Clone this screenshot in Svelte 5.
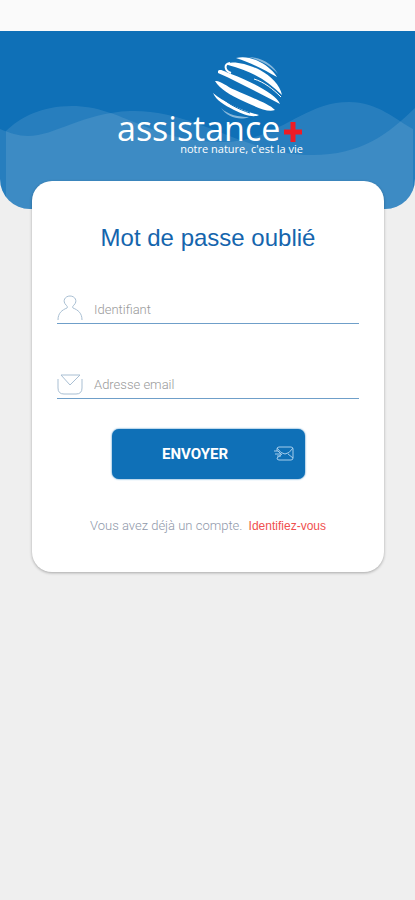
<script>
	let login = $state('');
	let email = $state('');
</script>

<div class="status"></div>

<header>
	<svg class="waves" viewBox="0 0 415 178" preserveAspectRatio="none" aria-hidden="true">
		<path
			d="M0 98 C10 102 18 105 28 105 C55 105 82 82 130 80 C195 78 245 124 312 124 C362 124 388 103 415 77 V178 H0 Z"
		/>
		<path
			d="M6 100 C20 86 42 75 72 75 C122 75 150 111 222 111 C278 111 302 71 349 71 C378 71 396 89 413 98 V178 H6 Z"
		/>
	</svg>

	<svg class="logo" viewBox="-6 0 192 100" role="img" aria-label="assistance+">
		<g fill="#fff">
			<path d="M130 1 C145 1 156 10 160 18 C152 9 142 4 130 1 Z" fill-opacity="0.5" />
			<path d="M118 2 C126 0 135 2 142 6 C150 10 156 16 159 21 C148 15 134 7 118 2 Z" />
			<path d="M110 7 C118 5 132 9 142 14 C153 20 162 29 164 39 C150 25 134 15 110 9 Z" />
			<path d="M100 15 C102 12 108 16 113 18 C132 25 158 38 162 48 C142 38 121 26 100 17 Z" />
			<path d="M97 25 C102 24 108 30 117 34 C134 42 150 47 157 54 C150 57 138 51 125 45 C112 39 102 33 97 25 Z" />
			<path d="M95 37 C106 46 122 54 141 59 C136 62 126 59 116 54 C106 49 98 44 95 37 Z" />
			<path d="M103 52 C110 59 121 61 131 61 C122 65 109 61 103 52 Z" fill-opacity="0.5" />
		</g>
		<g fill="none" stroke="#fff">
			<path d="M113 17 C107 15 105 8 112 7" stroke-width="2" />
			<path d="M136 23 C146 26 155 33 163 41" stroke-width="1" />
		</g>
		<path d="M102 40 C110 48 120 53 132 57" fill="none" stroke="#0f70b7" stroke-width="1" />
		<text class="name" x="-1" y="85">assistance</text>
		<path d="M175 66 V86 M166 76 H184" stroke="#ee1c25" stroke-width="5" />
		<text class="tagline" x="185" y="97" text-anchor="end">notre nature, c'est la vie</text>
	</svg>
</header>

<main>
	<h1>Mot de passe oublié</h1>

	<form onsubmit={(e) => e.preventDefault()}>
		<div class="field">
			<label for="login" aria-label="Identifiant">
				<svg viewBox="0 0 26 26">
					<path
						d="M1 25 C1 18 5 15 10 13 C11 12 10 11 9 10 C5 6 8 1 13 1 C18 1 21 6 17 10 C16 11 15 12 16 13 C21 15 25 18 25 25"
					/>
				</svg>
			</label>
			<input id="login" type="text" placeholder="Identifiant" bind:value={login} />
		</div>

		<div class="field">
			<label for="email" aria-label="Adresse email">
				<svg viewBox="0 0 26 26">
					<path d="M1 9 V18 Q1 24 7 24 H19 Q25 24 25 18 V9 M4 5 H23 L13 15 Z" />
				</svg>
			</label>
			<input id="email" type="email" placeholder="Adresse email" bind:value={email} />
		</div>

		<button type="submit">
			<span>ENVOYER</span>
			<svg viewBox="0 0 22 16" aria-hidden="true">
				<path
					d="M4 5 V3 Q4 1 6 1 H18 Q20 1 20 3 V12 Q20 14 18 14 H6 Q4 14 4 12 M4 2 Q8 8 12 8 Q16 8 20 2 M4 12 L9 8 M15 8 L20 12 M1 5 H5 L8 8 M2 8 H8 M4 10 H8"
				/>
			</svg>
		</button>
	</form>

	<p>Vous avez déjà un compte. <a href="#login">Identifiez-vous</a></p>
</main>

<style>
	:global(body) {
		margin: 0;
		background: #efefef;
		font-family: Roboto, 'Liberation Sans', sans-serif;
	}

	.status {
		height: 31px;
		background: #fafafa;
	}

	header {
		display: grid;
		justify-items: center;
		height: 178px;
		border-radius: 0 0 30px 30px;
		background: #0f70b7;
		overflow: hidden;
	}

	.waves,
	.logo {
		grid-area: 1 / 1;
	}

	.waves {
		width: 100%;
		height: 178px;
		fill: #fff;
		fill-opacity: 0.1;
	}

	.logo {
		width: 192px;
		height: 100px;
		margin-top: 25px;
	}

	.name {
		font: 34px 'Open Sans', sans-serif;
		fill: #fff;
	}

	.tagline {
		font: 11px 'Open Sans', sans-serif;
		fill: #fff;
	}

	main {
		position: relative;
		box-sizing: border-box;
		margin: -28px 31px 32px 32px;
		padding: 40px 25px 36px;
		border-radius: 20px;
		background: #fff;
		box-shadow: 0 1px 3px rgba(0, 0, 0, 0.3);
	}

	h1 {
		margin: 0;
		font: 24px/34px 'Liberation Sans', sans-serif;
		color: #1565ad;
		text-align: center;
	}

	form {
		display: flex;
		flex-direction: column;
		gap: 44px;
		margin-top: 38px;
	}

	.field {
		display: flex;
		align-items: center;
		gap: 11px;
		height: 30px;
		border-bottom: 1px solid #6f9fc9;
	}

	label,
	label svg {
		display: block;
		width: 26px;
		height: 26px;
	}

	label svg {
		fill: none;
		stroke: #a9bfd3;
	}

	input {
		flex: 1;
		min-width: 0;
		padding: 4px 0 0;
		border: none;
		outline: none;
		background: none;
		font: 300 13px/20px Roboto, sans-serif;
		color: #555;
	}

	input::placeholder {
		color: #999;
		opacity: 1;
	}

	button {
		display: flex;
		align-items: center;
		align-self: center;
		width: 193px;
		height: 50px;
		margin-top: -14px;
		padding: 0 10px 0 6px;
		border: none;
		border-radius: 7px;
		background: #0f70b7;
		box-shadow: 0 0 2px #0f70b7;
		font: 700 15px/20px Roboto, sans-serif;
		color: #fff;
		cursor: pointer;
	}

	button span {
		flex: 1;
		text-align: center;
	}

	button svg {
		width: 22px;
		height: 16px;
		fill: none;
		stroke: #a5cdec;
	}

	p {
		margin: 37px 0 0;
		font-size: 13px;
		font-weight: 300;
		line-height: 20px;
		color: #8f98aa;
		text-align: center;
	}

	a {
		margin-left: 3px;
		font: 12px/20px 'Liberation Sans', sans-serif;
		color: #f0504f;
		text-decoration: none;
	}
</style>
